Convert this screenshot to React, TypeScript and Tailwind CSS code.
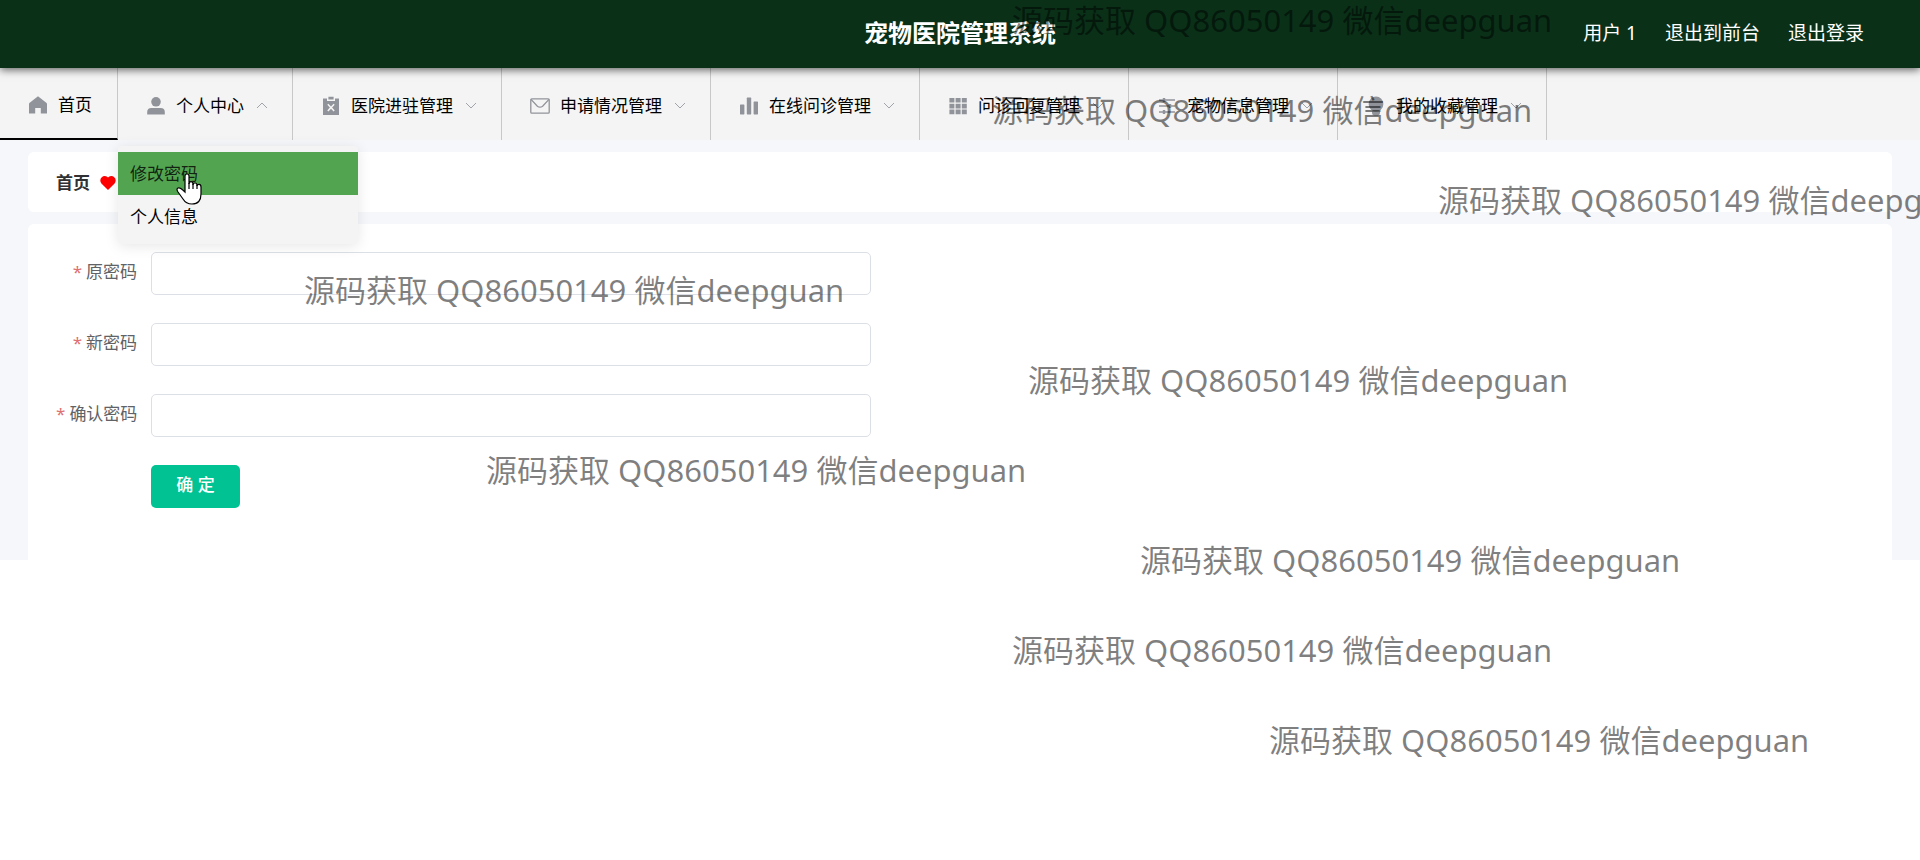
import React, { useState } from "react";

const icons: Record<string, React.ReactNode> = {
  home: (
    <path d="M10 1.2 L1.4 8 Q1 8.4 1 9 V18.4 H7.2 V13 H12.8 V18.4 H19 V9 Q19 8.4 18.6 8 Z" />
  ),
  user: (
    <>
      <circle cx="10" cy="5.8" r="4.8" />
      <path d="M1.2 18.6 V16 Q1.2 12 5.4 12 H14.6 Q18.8 12 18.8 16 V18.6 Z" />
    </>
  ),
  claim: (
    <path
      fillRule="evenodd"
      d="M2 2.6 H6 V5 H14 V2.6 H18 V19 H2 Z M7.4 0.8 H12.6 V3.6 H7.4 Z M6.3 8.8 L8.9 11.6 L6.3 14.4 L7.4 15.5 L10 12.7 L12.6 15.5 L13.7 14.4 L11.1 11.6 L13.7 8.8 L12.6 7.7 L10 10.5 L7.4 7.7 Z"
    />
  ),
  message: (
    <g fill="none" stroke="currentColor" strokeWidth="1.3">
      <rect x="0.8" y="2.8" width="18.4" height="14.4" rx="1" />
      <path d="M1 3.4 L7.4 10.2 Q10 12.2 12.6 10.2 L19 3.4" />
    </g>
  ),
  data: (
    <>
      <rect x="1" y="8.4" width="4.4" height="10" rx="0.6" />
      <rect x="7.8" y="1.6" width="4.4" height="16.8" rx="0.6" />
      <rect x="14.6" y="5.4" width="4.4" height="13" rx="0.6" />
    </>
  ),
  grid: (
    <path d="M1.4 2 h5 v4.6 h-5z M7.6 2 h5 v4.6 h-5z M13.8 2 h5 v4.6 h-5z M1.4 7.8 h5 v4.6 h-5z M7.6 7.8 h5 v4.6 h-5z M13.8 7.8 h5 v4.6 h-5z M1.4 13.6 h5 v4.6 h-5z M7.6 13.6 h5 v4.6 h-5z M13.8 13.6 h5 v4.6 h-5z" />
  ),
  operation: (
    <g fill="none" stroke="currentColor" strokeWidth="1.3">
      <path d="M2 4 H18 M2 10 H18 M2 16 H18" />
      <path d="M7 2 V6 M13 8 V12 M7 14 V18" strokeWidth="2.4" />
    </g>
  ),
  bulb: (
    <>
      <circle cx="10" cy="8" r="7.4" />
      <path d="M6 15.6 H14 V17 Q14 19.4 11.6 19.4 H8.4 Q6 19.4 6 17 Z" />
    </>
  ),
};

const menus = [
  { icon: "user", label: "个人中心", open: true },
  { icon: "claim", label: "医院进驻管理" },
  { icon: "message", label: "申请情况管理" },
  { icon: "data", label: "在线问诊管理" },
  { icon: "grid", label: "问诊回复管理" },
  { icon: "operation", label: "宠物信息管理" },
  { icon: "bulb", label: "我的收藏管理" },
];

const fields = [
  { id: "old-password", label: "原密码" },
  { id: "new-password", label: "新密码" },
  { id: "confirm-password", label: "确认密码" },
];

const Icon = ({ name }: { name: string }) => (
  <svg viewBox="0 0 20 20" className="size-5 shrink-0 text-[#909399]" fill="currentColor" aria-hidden="true">
    {icons[name]}
  </svg>
);

const Chevron = ({ up }: { up?: boolean }) => (
  <svg viewBox="0 0 12 12" className="ml-0.5 size-3 shrink-0 text-[#a0a3a9]" fill="none" stroke="currentColor" aria-hidden="true">
    <path d={up ? "M1 8 L6 3 L11 8" : "M1 3 L6 8 L11 3"} />
  </svg>
);

const Watermark = ({ className }: { className: string }) => (
  <span
    className={`pointer-events-none absolute z-30 whitespace-nowrap text-[31px] leading-10 text-black/50 ${className}`}
  >
    源码获取 QQ86050149 微信deepguan
  </span>
);

const App = () => {
  const [values, setValues] = useState<Record<string, string>>({});

  return (
    <div className="relative min-h-screen overflow-hidden bg-white font-['Noto_Sans','Noto_Sans_CJK_SC',sans-serif] text-[17px]">
      {/* Header */}
      <header className="relative z-10 grid h-17 grid-cols-[1fr_auto_1fr] items-center bg-[#0a3018] px-14 pb-0.5 text-white shadow-[0_2px_8px_rgba(0,0,0,0.6)]">
        <h1 className="col-start-2 text-2xl font-bold">宠物医院管理系统</h1>
        <div className="flex items-center justify-end gap-7 text-[19px]">
          <span>用户 1</span>
          <a href="#">退出到前台</a>
          <a href="#">退出登录</a>
        </div>
      </header>

      {/* Menu */}
      <nav className="flex h-18 bg-[#f4f4f4] text-black">
        <a href="#" className="flex items-center gap-2.5 border-r border-b-2 border-r-[#c8c8c8] border-b-black pt-1 pr-[25px] pl-7">
          <Icon name="home" />
          首页
        </a>
        {menus.map((menu) => (
          <div key={menu.label} className="relative flex border-r border-[#c8c8c8]">
            <button type="button" className="flex items-center gap-2.5 pt-1 pr-6 pl-7" aria-expanded={!!menu.open}>
              <Icon name={menu.icon} />
              {menu.label}
              <Chevron up={menu.open} />
            </button>
            {menu.open && (
              <div className="absolute top-[78px] left-0 z-20 w-60 rounded-sm bg-[#f4f4f4] py-1.5 shadow-[0_2px_14px_rgba(0,0,0,0.1)]">
                <a href="#" className="block bg-[#53a451] px-3 leading-[43px] text-black/80">
                  修改密码
                </a>
                <a href="#" className="block px-3 leading-[43px]">
                  个人信息
                </a>
              </div>
            )}
          </div>
        ))}
      </nav>

      {/* Content */}
      <main className="bg-[#f6f7fb] px-7 pt-3">
        <div className="flex h-15 items-center gap-2.5 rounded-md bg-white px-7 pt-0.5 font-bold text-[#303133]">
          首页
          <svg viewBox="0 0 16 14" className="h-4 w-4 text-[#ff0000]" fill="currentColor" aria-hidden="true">
            <path d="M8 14 L1.4 7.4 A4.2 4.2 0 0 1 8 1.6 A4.2 4.2 0 0 1 14.6 7.4 Z" />
          </svg>
        </div>

        <form
          className="mt-3 flex flex-col gap-7 rounded-t-md bg-white pt-7 pb-13 pl-7"
          onSubmit={(e) => e.preventDefault()}
        >
          {fields.map((field) => (
            <div key={field.id} className="flex items-center">
              <label htmlFor={field.id} className="w-[95px] shrink-0 pr-3.5 pb-1 text-right whitespace-nowrap text-[#606266]">
                <span className="mr-1 text-[#e07070]">*</span>
                {field.label}
              </label>
              <input
                id={field.id}
                type="password"
                value={values[field.id] ?? ""}
                onChange={(e) => setValues({ ...values, [field.id]: e.target.value })}
                className="h-[43px] w-[720px] rounded-[5px] border border-[#dcdfe6] px-4 outline-none"
              />
            </div>
          ))}
          <button type="submit" className="ml-[95px] h-[43px] w-[89px] rounded-[5px] bg-[#00c292] pb-1 font-medium text-white">
            确 定
          </button>
        </form>
      </main>

      <Watermark className="top-0 left-[1012px]" />
      <Watermark className="top-[90px] left-[992px]" />
      <Watermark className="top-[180px] left-[1438px]" />
      <Watermark className="top-[270px] left-[304px]" />
      <Watermark className="top-[360px] left-[1028px]" />
      <Watermark className="top-[450px] left-[486px]" />
      <Watermark className="top-[540px] left-[1140px]" />
      <Watermark className="top-[630px] left-[1012px]" />
      <Watermark className="top-[720px] left-[1269px]" />

      {/* Pointer */}
      <svg viewBox="0 0 26 32" className="absolute top-[173px] left-44 z-30 h-8 w-[26px]" fill="white" stroke="black" strokeWidth="1.2" aria-hidden="true">
        <path d="M9 19 V3 Q9 1 11 1 Q13 1 13 3 V11 Q13 8.6 15 8.6 Q17 8.6 17 11 V12 Q17 10 19 10 Q21 10 21 12 V13 Q21 11.4 23 11.4 Q25 11.4 25 14 V21 Q25 31 16 31 Q10 31 7 26 L2 19 Q0 16 2 15 Q4 14 9 19 Z" />
        <path d="M13 10 V16 M17 11 V16 M21 12 V16" fill="none" />
      </svg>
    </div>
  );
};

export default App;
